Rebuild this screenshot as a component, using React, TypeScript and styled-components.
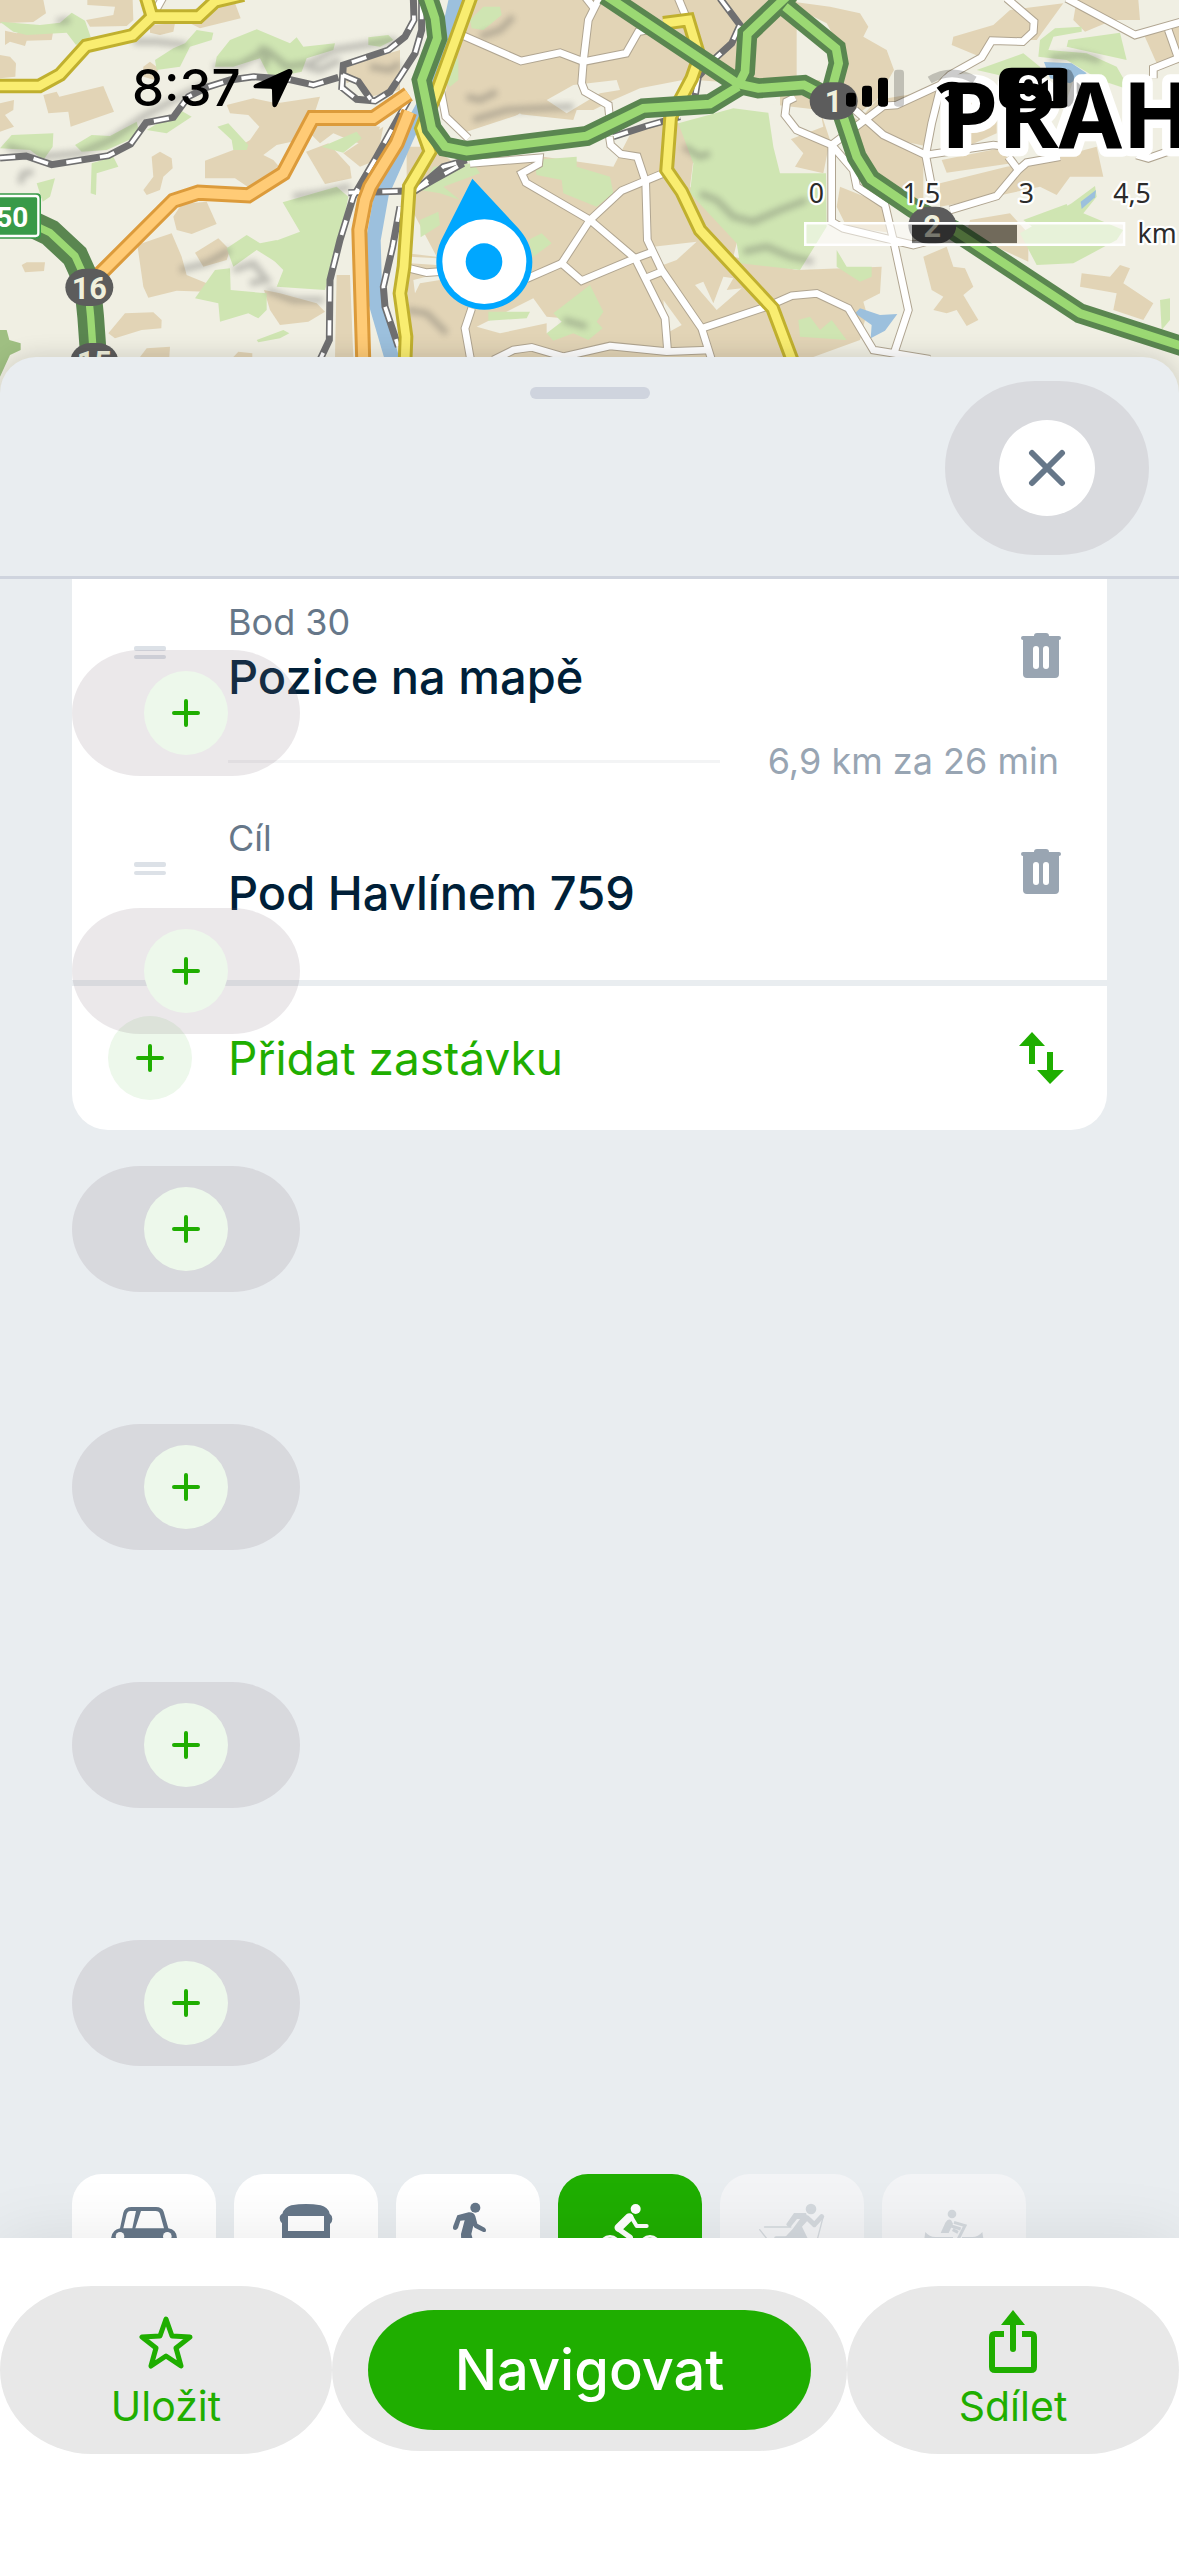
import React from 'react';
import styled, {createGlobalStyle} from 'styled-components';

const GREEN = '#1fae00';
const SLATE = '#667789';
const SHEET = '#e9edf0';

type RoadKind = 'motorway' | 'ring' | 'primary' | 'secondary' | 'street';

const roadStyles: Record<RoadKind, { casing: string; width: number; fill: string; inner: number }> = {
    motorway: {casing: '#5a8650', width: 60, fill: '#9bd873', inner: 26},
    ring: {casing: '#5a8650', width: 80, fill: '#9bd873', inner: 22},
    primary: {casing: '#dc9b3b', width: 48, fill: '#ffcb76', inner: 30},
    secondary: {casing: '#c0b02f', width: 44, fill: '#f9ed70', inner: 26},
    street: {casing: '#b0a591', width: 26, fill: '#ffffff', inner: 20},
};

const Roads = ({kind, lines}: { kind: RoadKind; lines: string[] }) => {
    const s = roadStyles[kind];
    return (
        <g fill="none">
            {lines.map(l => <polyline key={l} points={l} stroke={s.casing} strokeWidth={s.width}/>)}
            {lines.map(l => <polyline key={l} points={l} stroke={s.fill} strokeWidth={s.inner}/>)}
        </g>
    );
};

const Rails = ({lines}: { lines: string[] }) => (
    <g fill="none">
        {lines.map(l => <polyline key={l} points={l} stroke="#6f6f70" strokeWidth="21"/>)}
        {lines.map(l => <polyline key={l} points={l} stroke="#fff" strokeWidth="11" strokeDasharray="46 56"/>)}
    </g>
);

const Areas = ({color, shapes}: { color: string; shapes: string[] }) => (
    <g fill={color}>
        {shapes.map(s => <polygon key={s} points={s}/>)}
    </g>
);

const LAND = '#f0efe3';
const TOWN = '#e2d4b6';
const WOOD = '#cfe5b2';
const WATER = '#9cc0dd';

const leftTown = [
    '0,0 130,0 138,40 100,66 0,70',
    '262,0 398,0 400,60 380,78 270,80 258,60 340,45 345,20 262,15',
    '15,92 50,100 90,85 160,92 155,120 80,122 75,138 30,125 15,135',
    '0,165 30,170 48,190 46,230 0,235',
    '0,310 42,300 40,330 15,345 42,380 0,395',
    '130,285 170,275 178,290 310,258 342,335 212,380 205,335 145,340',
    '560,30 705,10 722,55 600,85 570,70',
    '450,75 525,70 520,95 480,105 450,98',
    '430,200 450,185 475,205 465,240 430,230',
    '680,315 760,295 830,310 960,290 940,350 900,420 830,435 790,465 820,480 855,520 850,540 745,562 705,535 615,535 615,482 700,450 750,420 778,380 745,345 690,340',
    '455,470 480,455 515,475 518,505 490,530 480,570 440,585 430,570 460,530',
    '918,455 985,430 1050,500 1055,535 975,552',
    '940,350 1060,370 1140,380 1120,440 1060,425 1000,400 960,430 930,400',
    '1030,200 1200,150 1200,270 1110,290 1060,240 1040,250',
    '1030,460 1150,380 1130,480 1080,500',
    '520,650 545,612 620,605 650,672 575,702 530,690',
    '412,735 470,715 515,700 545,770 560,825 620,850 618,875 530,872 445,893 430,860',
    '585,758 655,715 690,750 680,780 610,800',
    '65,795 80,787 135,787 132,813 75,817',
    '325,1000 375,940 460,937 485,960 484,985 425,990 345,1015',
    '420,1071 440,1045 510,1040 508,1071',
    '792,870 840,880 950,910 975,935 925,965 840,975 810,930',
    '1010,825 1050,825 1060,1071 1005,1071',
    '700,1071 715,1055 757,1060 757,1071',
];

const centralTown = [
    '170,0 1190,0 1190,232 1015,250 860,238 720,265 640,300 520,360 360,343 200,395 130,330 160,120',
    '20,440 95,440 180,500 430,470 640,500 700,385 780,370 840,370 880,480 870,560 1015,710 1000,770 1190,810 1445,800 1440,880 1390,905 1400,940 1380,1020 1240,1071 30,1071 20,760 110,770 20,600',
];

const eastTown = [
    '0,0 150,20 240,40 265,80 250,110 320,150 342,210 290,300 230,345 190,250 200,180 140,70',
    '0,240 120,240 110,300 150,420 130,520 45,500 70,460 0,380',
    '290,300 470,270 445,440 310,410 250,345',
    '200,340 300,400 430,470 430,620 380,610 290,535 240,470',
    '690,30 850,10 770,120 660,120 600,170 515,135 520,110 640,75',
    '890,0 1075,0 1080,60 1000,60 915,95 880,60',
    '1090,100 1197,70 1197,190 1130,190',
    '485,480 660,445 695,490 500,518',
    '480,550 680,500 780,485 950,440 970,530 870,530 830,585 780,560 640,590 480,620',
    '430,770 500,740 520,800 555,805 580,860 550,885 595,960 560,978 530,930 500,940 460,930 490,890 455,870',
    '905,820 990,830 1020,795 1050,805 1030,850 1120,910 1090,960 1000,930 1010,880 900,860',
    '570,660 690,640 745,700 745,785 560,700',
    '180,560 330,620 340,700 200,680 170,620',
    '520,300 650,260 650,400 560,440 520,390',
];

const greens = [
    '0,65 120,75 180,68 215,38 255,62 272,110 228,135 200,98 80,105 40,95',
    '465,180 520,145 555,130 590,90 640,98 635,120 570,140 540,200 470,210',
    '645,200 650,170 690,120 770,88 870,130 890,112 910,140 1005,130 1000,150 920,175 905,215 810,235 780,175 700,200',
    '225,435 275,405 330,408 410,365 420,405 320,450 245,455',
    '35,405 160,400 158,440 130,480 90,450 0,445',
    '110,550 165,535 150,590 128,605',
    '275,490 340,470 355,500 290,520 288,585 272,580',
    '652,380 685,370 745,435 740,450 700,450 695,420',
    '440,390 540,330 575,350 500,400',
    '965,440 1070,395 1085,415 1030,458',
    '848,607 1010,560 1045,590 1020,720 975,870 830,860 850,810 780,740 900,695',
    '680,745 740,705 780,730 830,720 850,800 770,750 700,800',
    '645,810 690,805 692,870 800,880 800,930 775,955 745,940 660,965 655,910 585,895',
    '770,1020 850,990 868,1000 840,1015 775,1027',
    '1105,112 1165,105 1180,120 1140,140 1105,135',
    '1410,60 1450,20 1500,20 1505,45 1450,90 1415,85',
    '1330,190 1375,175 1375,240 1350,260 1330,240',
    '1600,480 1730,470 1730,500 1830,530 1840,580 1790,620 1690,580 1685,540 1610,525',
    '1260,660 1315,635 1320,675 1262,712',
    '1585,720 1625,700 1655,730 1600,770',
    '1660,940 1770,855 1810,935 1790,965 1808,985 1765,1020 1720,1000 1660,1022 1640,1000 1685,965',
    '1465,935 1590,935 1580,955 1465,962',
    '2035,370 2200,325 2305,338 2320,440 2340,520 2478,520 2480,680 2400,810 2220,790 2210,730 2070,580 2080,490',
    '2395,960 2430,950 2460,990 2495,960 2540,1020 2400,1010',
    '2510,750 2540,800 2615,800 2615,830 2580,845 2510,800',
    '3115,170 3120,120 3165,85 3245,80 3245,95 3160,110 3145,150 3260,160 3350,200 3390,270 3300,240 3200,180',
    '3205,120 3360,98 3380,180 3200,140',
    '2930,210 3070,160 3120,200 3130,250 3060,240',
    '3070,660 3200,612 3210,635 3110,690',
    '3215,610 3285,558 3290,590 3250,640 3370,690 3350,720 3220,790 3110,795 3060,700',
    '3480,900 3510,895 3510,960 3485,990',
    '1300,500 1420,490 1440,520 1330,560 1380,600 1320,580 1260,570',
];

const clearings = [
    '1640,300 1720,255 1850,240 1860,270 1800,280 1700,340',
    '1470,400 1560,340 1580,360 1720,360 1730,330 1840,330 1840,360 1560,395',
    '1960,740 2090,725 2030,780 1975,800',
    '2085,855 2110,845 2140,910 2170,830 2200,835 2180,870 2225,865 2150,930',
    '1990,900 2045,975 2000,1000',
    '1430,980 1600,895 1640,950 1690,955 1690,1000 1640,1000 1640,970 1500,1000',
    '1230,770 1310,775 1310,795 1230,790',
    '1240,840 1320,820 1320,840 1260,850 1245,880',
    '2200,300 2460,330 2470,380 2340,430 2310,340',
    '2160,660 2180,645 2220,700 2200,690',
];

const streets = [
    '1385,105 1563,183 1680,158 1750,185 1878,160 1915,95 1945,90',
    '1800,-10 1765,60 1750,185 1745,250 1755,275 1825,315 1828,345',
    '1755,-10 1785,28',
    '2035,-5 2058,50',
    '1322,270 1337,350 1405,415',
    '1828,410 1832,435 1862,462 1912,470 1937,545 1942,720 1985,810 2105,985 2135,1080',
    '1410,490 1618,474 1616,492 1565,520 1578,548 1770,660 1905,775 1995,955 2003,1055',
    '1995,518 1937,542 1865,572 1770,660 1685,790 1745,842 1905,775 1960,755',
    '1685,790 1580,836',
    '1215,802 1280,818 1320,815',
    '1940,833 1985,815',
    '2105,985 2305,918 2375,887 2450,880 2545,925 2620,1050 2680,1060 2790,1078',
    '1480,1080 1540,1050 1595,1042 1690,1070 1830,1038 2000,1055 2130,1050',
    '1415,925 1395,985 1412,1080',
    '3020,-5 3102,65 3100,95 3068,125 2975,122 2945,172 2850,225 2820,255 2690,315 2650,318 2495,435 2495,665 2530,685 2740,735 2780,725',
    '2495,435 2390,390 2355,345 2360,305 2385,292',
    '2565,330 2650,405 2777,465 2980,435 3020,440',
    '2820,270 2795,370 2777,465 2795,560',
    '2495,435 2560,510 2570,560 2655,615 2680,720 2725,930 2682,1060',
    '2850,630 2990,588 3055,510 3080,488 3180,470',
    '3025,470 3055,510',
    '3200,-5 3405,105 3545,65',
    '3505,90 3535,175 3460,205 3460,235',
    '3545,440 3445,475 3410,465',
    '462,40 490,-10',
];

// soft relief strokes, blurred below
const relief = [
    '20,440 130,470 240,460 330,420 430,350 540,290 620,250',
    '640,200 720,195 800,150 860,200 930,190 1000,150 1190,120',
    '780,140 800,170 790,205',
    '920,200 960,210 1020,180',
    '880,590 960,580 1050,560',
    '700,810 760,790 800,840 750,850',
    '800,870 880,900 970,900',
    '1110,200 1170,210 1200,190',
    '1400,290 1440,300 1490,275',
    '1420,360 1520,330 1720,320',
    '1440,110 1500,90 1540,50',
    '2050,440 2100,470 2130,460',
    '2100,580 2150,600 2200,650 2260,665 2340,630 2420,600',
    '2230,755 2300,740 2370,770 2440,785',
    '400,125 470,125 560,135',
    '3150,175 3240,165 3300,180',
    '1220,930 1280,940 1340,1000',
    '1690,960 1760,980',
    '60,550 70,520 100,515',
    '170,65 210,60',
    '540,810 620,790 690,750',
];

const MapDrawing = () => (
    <MapSvg viewBox="0 0 3537 1200" preserveAspectRatio="xMinYMin slice" aria-label="Mapa">
        <defs>
            <filter id="relief" x="-5%" y="-5%" width="110%" height="110%">
                <feGaussianBlur stdDeviation="9"/>
            </filter>
        </defs>
        <rect width="3537" height="1200" fill={LAND}/>
        <Areas color={TOWN} shapes={leftTown}/>
        <g transform="translate(1200)"><Areas color={TOWN} shapes={centralTown}/></g>
        <g transform="translate(2340)"><Areas color={TOWN} shapes={eastTown}/></g>
        <Areas color={LAND} shapes={clearings}/>
        <Areas color={WOOD} shapes={greens}/>
        <Areas color="#9fbf82" shapes={['0,990 20,990 28,1020 62,1030 62,1050 30,1065 0,1130']}/>
        <Areas
            color={WATER}
            shapes={[
                '2565,940 2580,925 2640,945 2692,942 2655,992 2612,1015 2615,975',
                '3132,186 3215,190 3260,220 3210,250 3150,235',
                '3242,605 3288,570 3285,592 3245,627',
            ]}
        />
        <g fill="none" stroke="#555" strokeWidth="20" opacity="0.32" filter="url(#relief)">
            {relief.map(r => <polyline key={r} points={r}/>)}
        </g>
        <polyline
            points="1370,-10 1335,150 1280,300 1225,400 1145,580 1120,720 1125,900 1180,1090"
            fill="none" stroke={WATER} strokeWidth="44"
        />
        <Rails lines={[
            '0,474 78,468 155,494 325,467 392,432 438,368 520,352 565,290 620,262 690,240 760,230 865,238 940,255 1015,232',
            '1025,270 1030,195 1165,150 1215,110 1242,60 1240,-5',
            '1028,225 1075,245 1112,298',
            '1025,262 1070,298 1125,303 1170,275 1200,230 1245,160 1265,90 1265,-5',
            '1225,300 1130,470 1060,590 1020,720 990,840 988,1020 955,1090',
            '1045,578 1245,572 1330,500 1400,480',
            '1245,572 1300,540 1390,490',
            '1200,620 1178,740 1150,860 1155,920 1195,1040',
            '2160,-5 2220,75 2195,130 2140,180 2095,230 2085,290',
            '1840,410 1940,378 2040,350',
        ]}/>
        <Roads kind="street" lines={streets}/>
        <Roads kind="secondary" lines={[
            '-10,258 118,258 180,224 258,138 398,106 456,50 596,50 645,4 730,-16',
            '456,50 435,-20',
            '1415,-15 1312,270 1265,385 1290,455 1228,560 1212,800 1200,880 1218,1010 1215,1090',
            '1990,70 2065,60 2098,170 2075,235 2035,310 2012,350 2000,510 2045,575 2100,690 2318,925 2380,1090',
        ]}/>
        <Roads kind="primary" lines={[
            '300,822 520,602 595,578 745,586 850,520 938,354 1120,354 1225,282',
            '1228,335 1190,430 1110,560 1095,600 1078,690 1090,1090',
        ]}/>
        <Roads kind="motorway" lines={[
            '1283,-10 1305,55 1312,115 1265,240 1295,385 1335,440 1400,453 1760,408 1930,325 2130,312 2215,260',
            '2215,255 2235,215 2242,102 2370,-20',
            '1815,-15 2215,252 2275,265 2412,255 2470,285',
            '2355,20 2508,145 2516,190 2500,250 2530,350 2570,470 2612,538 2740,625 2860,690 3240,940 3550,1040',
        ]}/>
        <Roads kind="ring" lines={['70,660 150,698 225,768 262,850 272,950 282,1090']}/>

        <rect x="-40" y="580" width="163" height="136" rx="12" fill="#389a48"/>
        <rect x="-40" y="588" width="155" height="120" rx="8" fill="none" stroke="#fff" strokeWidth="7"/>
        <SignText x="37" y="680">50</SignText>
        <Exit x={268} y={862} label="16"/>
        <Exit x={283} y={1085} label="15"/>
        <Exit x={2501} y={303} label="1"/>
        <Exit x={2797} y={676} label="2"/>

        <path
            d="M1417 536 L1555 685 C1582 715 1597 750 1597 786 A144 143 0 0 1 1309 786 C1309 755 1318 730 1330 708 Z"
            fill="#00a7ff"
        />
        <ellipse cx="1453" cy="785" rx="126" ry="127" fill="#fff"/>
        <circle cx="1452" cy="785" r="55" fill="#00a7ff"/>

        <CityName x="2823" y="443">PRAH</CityName>

        <rect x="2420" y="674" width="316" height="56" fill="#fff" fillOpacity="0.5"/>
        <rect x="2736" y="674" width="315" height="56" fill="#000" fillOpacity="0.5"/>
        <rect x="3051" y="674" width="317" height="56" fill="#fff" fillOpacity="0.5"/>
        <rect x="2416" y="670" width="956" height="64" fill="none" stroke="#fff" strokeWidth="8"/>
        <ScaleText x="2449" y="610">0</ScaleText>
        <ScaleText x="2764" y="610">1,5</ScaleText>
        <ScaleText x="3079" y="610">3</ScaleText>
        <ScaleText x="3396" y="610">4,5</ScaleText>
        <ScaleText x="3471" y="728">km</ScaleText>
    </MapSvg>
);

const Exit = ({x, y, label}: { x: number; y: number; label: string }) => (
    <g>
        <rect x={x - 72} y={y - 56} width="144" height="112" rx="62" ry="56" fill="#5c5c5c"/>
        <ExitText x={x} y={y + 34}>{label}</ExitText>
    </g>
);

const StatusBar = () => (
    <Status>
        <Clock>
            8:37
            <svg width="40" height="40" viewBox="0 0 118 116">
                <path
                    d="M103 3 L8 46 C-2 51 0 59 9 59 L52 60 Q56 60 56 64 L57 106 C57 116 67 118 71 109 L116 14 C119 6 111 -1 103 3Z"
                    fill="#000"
                />
            </svg>
        </Clock>
        <svg width="246" height="48" viewBox="0 0 738 144" aria-label="Signál, Wi-Fi a baterie">
            <defs>
                <mask id="charge">
                    <rect width="738" height="144" fill="#fff"/>
                    <ChargeText x="571" y="112">91</ChargeText>
                </mask>
            </defs>
            <rect x="0" y="86" width="30" height="42" rx="10"/>
            <rect x="48" y="65" width="30" height="63" rx="10"/>
            <rect x="96" y="41" width="30" height="87" rx="10"/>
            <rect x="144" y="17" width="30" height="111" rx="10" opacity="0.2"/>
            <g fill="none" stroke="#000" strokeWidth="23">
                <path d="M251 48 Q318 8 386 48" opacity="0.2"/>
                <path d="M279 80 Q318 50 357 80"/>
            </g>
            <path d="M296 102 Q318 86 340 102 L318 126Z"/>
            <path d="M664 14 Q684 20 684 46 V96 Q684 124 664 130Z" opacity="0.28"/>
            <path d="M692 54 Q704 60 704 72 Q704 84 692 90Z" opacity="0.28"/>
            <path
                d="M497 11 H640 Q664 11 664 20 V124 Q664 133 640 133 H497 Q459 133 459 95 V49 Q459 11 497 11Z"
                mask="url(#charge)"
            />
        </svg>
    </Status>
);

const PlusIcon = () => (
    <svg width="28" height="28" viewBox="0 0 28 28">
        <path d="M14 2V26M2 14H26" stroke={GREEN} strokeWidth="4" strokeLinecap="round"/>
    </svg>
);

const TrashIcon = () => (
    <svg width="40" height="45" viewBox="0 0 40 45">
        <path
            d="M13 3Q13 0 16 0H25Q28 0 28 3H38Q40 3 40 5T38 7V41Q38 45 34 45H6Q2 45 2 41V7Q0 7 0 5T2 3Z"
            fill="#99a5b2"
        />
        <rect x="12" y="13" width="6" height="23" rx="3" fill="#fff"/>
        <rect x="22" y="13" width="6" height="23" rx="3" fill="#fff"/>
    </svg>
);

const GripIcon = () => (
    <svg width="32" height="14" viewBox="0 0 32 14">
        <rect width="32" height="5" rx="2" fill="#dce1e7"/>
        <rect y="9" width="32" height="4" rx="2" fill="#dce1e7"/>
    </svg>
);

const stops = [
    {label: 'Bod 30', name: 'Pozice na mapě', leg: '6,9 km za 26 min'},
    {label: 'Cíl', name: 'Pod Havlínem 759'},
];

type Mode = {
    name: string;
    state?: 'active' | 'disabled';
    icon: React.ReactNode;
}

const modes: Mode[] = [
    {
        name: 'Auto',
        icon: (
            <>
                <path
                    fillRule="evenodd"
                    d="M144 163 L154 116 Q158 99 179 99 H252 Q270 99 275 113 L289 163 Q315 166 315 196 V260 H117 V196 Q118 168 144 163Z M154 163 L164 120 Q167 111 174 111 H192 L181 163Z M190 163 L207 111 H250 Q262 111 264 120 L276 163Z"
                    fill="currentColor"
                />
                <circle cx="144" cy="187" r="13" fill="#fff"/>
                <circle cx="286" cy="187" r="13" fill="#fff"/>
            </>
        ),
    },
    {
        name: 'MHD',
        icon: (
            <path
                fillRule="evenodd"
                d="M144 270 V148 Q137 142 137 133 Q137 122 145 119 Q152 99 172 94 Q216 86 260 94 Q282 99 287 119 Q295 124 295 135 Q295 145 288 150 V270Z M162 126 V171 H270 V126Z"
                fill="currentColor"
            />
        ),
    },
    {
        name: 'Pěšky',
        icon: (
            <>
                <circle cx="238" cy="101" r="15" fill="currentColor"/>
                <path
                    d="M184 124 L218 115 Q234 114 238 127 L244 149 L266 161 Q273 167 268 174 L262 174 L236 161 L232 155 L226 180 L234 210 H196 L195 180 L206 139 L193 140 L186 162 Q180 171 172 166 Q170 162 172 155Z"
                    fill="currentColor"
                />
            </>
        ),
    },
    {
        name: 'Kolo',
        state: 'active',
        icon: (
            <g fill="none" stroke="currentColor" strokeLinecap="round" strokeLinejoin="round">
                <circle cx="233" cy="105" r="15" fill="currentColor" stroke="none"/>
                <path d="M214 130 L182 161" strokeWidth="25"/>
                <path d="M218 126 L236 156 H266" strokeWidth="12"/>
                <path d="M184 167 L217 190 V230" strokeWidth="16"/>
                <circle cx="156" cy="216" r="29" strokeWidth="8"/>
                <circle cx="276" cy="216" r="29" strokeWidth="8"/>
            </g>
        ),
    },
    {
        name: 'Běžky',
        state: 'disabled',
        icon: (
            <g fill="none" stroke="currentColor" strokeLinecap="round" strokeLinejoin="round">
                <circle cx="273" cy="105" r="16" fill="currentColor" stroke="none"/>
                <path
                    d="M222 117 H258 L265 137 L246 158 L264 195 H190 L218 165 L240 135 H231 L211 160 Q198 156 199 150Z"
                    fill="currentColor" stroke="none"
                />
                <path d="M262 132 L283 152 L305 128" strokeWidth="15"/>
                <path d="M309 130 L291 200" strokeWidth="4"/>
                <path d="M134 159 H212" strokeWidth="5"/>
                <path d="M119 167 L150 206" strokeWidth="4"/>
                <path d="M168 192 H215" strokeWidth="11"/>
            </g>
        ),
    },
    {
        name: 'Loď',
        state: 'disabled',
        icon: (
            <>
                <circle cx="210" cy="120" r="13" fill="currentColor"/>
                <path d="M176 177 L190 146 Q198 132 207 138 L213 149 L200 177Z" fill="currentColor"/>
                <path
                    d="M216 145 L249 155 L223 206 M208 156 L236 165 M212 167 L228 175"
                    fill="none" stroke="currentColor" strokeWidth="9"
                />
                <path
                    d="M126 200 L130 174 Q142 189 160 189 H213 V200Z M305 200 L301 174 Q289 189 271 189 H240 V200Z"
                    fill="currentColor"
                />
            </>
        ),
    },
];

const App = () => (
    <Page>
        <GlobalStyle/>
        <MapArea>
            <MapDrawing/>
            <StatusBar/>
        </MapArea>
        <Sheet>
            <SheetHeader>
                <Grabber/>
                <CloseButton aria-label="Zavřít">
                    <CloseDisc>
                        <svg width="38" height="38" viewBox="0 0 38 38">
                            <path d="M4 4L34 34M34 4L4 34" stroke={SLATE} strokeWidth="6" strokeLinecap="round"/>
                        </svg>
                    </CloseDisc>
                </CloseButton>
            </SheetHeader>
            <SheetBody>
                <Card>
                    <Stops>
                        {stops.map(stop => (
                            <li key={stop.label}>
                                <StopRow>
                                    <GripIcon/>
                                    <div>
                                        <StopLabel>{stop.label}</StopLabel>
                                        <StopName>{stop.name}</StopName>
                                    </div>
                                    <RemoveButton aria-label={`Odstranit ${stop.name}`}>
                                        <TrashIcon/>
                                    </RemoveButton>
                                </StopRow>
                                {stop.leg && <Leg>{stop.leg}</Leg>}
                            </li>
                        ))}
                    </Stops>
                    <AddRow>
                        <AddButton>
                            <PlusDisc><PlusIcon/></PlusDisc>
                            Přidat zastávku
                        </AddButton>
                        <SwapButton aria-label="Otočit trasu">
                            <svg width="46" height="52" viewBox="0 0 46 52">
                                <path
                                    d="M13 0L26 14H16V32H10V14H0Z M28 20H34V38H45L31 52L18 38H28Z"
                                    fill={GREEN}
                                />
                            </svg>
                        </SwapButton>
                    </AddRow>
                </Card>
                <Inserts>
                    {[1, 2, 3, 4, 5, 6].map(n => (
                        <InsertButton key={n} aria-label={`Vložit zastávku ${n}`}>
                            <PlusDisc><PlusIcon/></PlusDisc>
                        </InsertButton>
                    ))}
                </Inserts>
                <Modes>
                    {modes.map(mode => (
                        <ModeButton key={mode.name} $state={mode.state} aria-label={mode.name}>
                            <svg width="144" height="144" viewBox="0 0 432 432">{mode.icon}</svg>
                        </ModeButton>
                    ))}
                </Modes>
            </SheetBody>
        </Sheet>
        <BottomBar>
            <ActionButton>
                <ActionIcon>
                    <svg width="54" height="53" viewBox="0 0 54 53">
                        <path
                            d="M27 3L33 20L51 21L37 32L42 50L27 40L12 50L17 32L3 21L21 20Z"
                            fill="none" stroke={GREEN} strokeWidth="5" strokeLinejoin="round"
                        />
                    </svg>
                </ActionIcon>
                Uložit
            </ActionButton>
            <NavigateButton>
                <NavigateLabel>Navigovat</NavigateLabel>
            </NavigateButton>
            <ActionButton>
                <ActionIcon>
                    <svg width="48" height="64" viewBox="0 0 48 64">
                        <path
                            d="M15 24H6Q3 24 3 27V57Q3 60 6 60H42Q45 60 45 57V27Q45 24 42 24H33"
                            fill="none" stroke={GREEN} strokeWidth="6"
                        />
                        <path d="M24 12V39" stroke={GREEN} strokeWidth="6" strokeLinecap="round"/>
                        <path d="M24 0L36 15H12Z" fill={GREEN}/>
                    </svg>
                </ActionIcon>
                Sdílet
            </ActionButton>
        </BottomBar>
    </Page>
);

export default App;

const GlobalStyle = createGlobalStyle`
  * {
    box-sizing: border-box;
  }

  body {
    margin: 0;
    background: #fff;
    font-family: Inter, "Noto Sans", sans-serif;
  }

  button {
    margin: 0;
    padding: 0;
    border: 0;
    background: none;
    font: inherit;
    color: inherit;
    cursor: pointer;
  }

  svg {
    display: block;
    flex: none;
  }
`;

const Page = styled.main`
  display: flex;
  flex-direction: column;
  height: 100vh;
  overflow: hidden;
`;

const MapArea = styled.div`
  position: relative;
  flex: none;
  height: 400px;
  overflow: hidden;
`;

const MapSvg = styled.svg`
  width: 100%;
  height: 100%;
`;

const SignText = styled.text`
  font: 700 84px "Liberation Sans Narrow", Roboto, sans-serif;
  text-anchor: middle;
  fill: #fff;
`;

const ExitText = styled.text`
  font: 700 92px "Liberation Sans Narrow", Roboto, sans-serif;
  text-anchor: middle;
  fill: #f0f0dc;
`;

const CityName = styled.text`
  font: 700 276px "Noto Sans", sans-serif;
  fill: #000;
  stroke: #fff;
  stroke-width: 50px;
  stroke-linejoin: round;
  paint-order: stroke;
`;

const ScaleText = styled.text`
  font: 400 80px "Noto Sans", sans-serif;
  text-anchor: middle;
  fill: #2b2b2b;
  stroke: #fff;
  stroke-width: 14px;
  stroke-linejoin: round;
  paint-order: stroke;
`;

const ChargeText = styled.text`
  font: 700 106px Inter, sans-serif;
  text-anchor: middle;
  fill: #000;
`;

const Status = styled.div`
  position: absolute;
  top: 0;
  left: 0;
  right: 0;
  display: flex;
  align-items: center;
  justify-content: space-between;
  padding: 63px 87px 0 132px;
`;

const Clock = styled.div`
  display: flex;
  align-items: center;
  gap: 12px;
  font-size: 51px;
  font-weight: 500;
  line-height: 50px;
`;

const Sheet = styled.section`
  position: relative;
  flex: 1;
  display: flex;
  flex-direction: column;
  min-height: 0;
  margin-top: -43px;
  border-radius: 36px 36px 0 0;
  background: ${SHEET};
  box-shadow: 0 0 24px rgba(0, 0, 0, 0.16);
`;

const SheetHeader = styled.header`
  display: grid;
  grid-template-columns: 1fr 120px 1fr;
  align-items: start;
  height: 222px;
  padding: 24px 30px 0;
  border-bottom: 3px solid #cfd4de;
`;

const Grabber = styled.div`
  grid-column: 2;
  height: 12px;
  margin-top: 6px;
  border-radius: 6px;
  background: #cfd4de;
`;

const CloseButton = styled.button`
  display: flex;
  align-items: center;
  justify-content: center;
  justify-self: end;
  width: 204px;
  height: 174px;
  border-radius: 90px / 87px;
  background: #d9dade;
`;

const CloseDisc = styled.span`
  display: flex;
  align-items: center;
  justify-content: center;
  width: 96px;
  height: 96px;
  border-radius: 50%;
  background: #fff;
`;

const SheetBody = styled.div`
  position: relative;
  flex: 1;
  display: flex;
  flex-direction: column;
  min-height: 0;
  padding: 0 72px;
  overflow: hidden;
`;

const Card = styled.div`
  border-radius: 0 0 36px 36px;
  background: #fff;
`;

const Stops = styled.ul`
  margin: 0;
  padding: 0 0 37px;
  border-bottom: 6px solid ${SHEET};
  list-style: none;
`;

const StopRow = styled.div`
  display: grid;
  grid-template-columns: 32px 1fr auto;
  column-gap: 62px;
  align-items: center;
  height: 148px;
  padding: 0 46px 0 62px;
`;

const StopLabel = styled.div`
  font-size: 36px;
  line-height: 48px;
  color: ${SLATE};
`;

const StopName = styled.div`
  font-size: 47px;
  font-weight: 500;
  line-height: 62px;
  color: #001f38;
`;

const RemoveButton = styled.button`
  padding-top: 5px;
`;

const SwapButton = styled.button`
  flex: none;
`;

const Leg = styled.div`
  display: flex;
  align-items: center;
  gap: 48px;
  height: 68px;
  padding: 0 48px 0 156px;
  font-size: 36px;
  color: #98a5b3;

  &::before {
    content: "";
    flex: 1;
    height: 3px;
    background: #f3f4f5;
  }
`;

const AddRow = styled.div`
  display: flex;
  align-items: center;
  justify-content: space-between;
  height: 144px;
  padding: 0 42px 0 36px;
`;

const AddButton = styled.button`
  display: flex;
  align-items: center;
  gap: 36px;
  font-size: 46px;
  color: ${GREEN};
`;

const PlusDisc = styled.span`
  display: flex;
  align-items: center;
  justify-content: center;
  width: 84px;
  height: 84px;
  border-radius: 50%;
  background: #edf8eb;
`;

const Inserts = styled.div`
  position: absolute;
  top: 71px;
  left: 72px;
  display: flex;
  flex-direction: column;
  gap: 132px;
`;

const InsertButton = styled.button`
  display: flex;
  align-items: center;
  justify-content: center;
  width: 228px;
  height: 126px;
  border-radius: 68px / 63px;
  background: rgba(128, 114, 122, 0.16);
`;

const Modes = styled.div`
  display: flex;
  gap: 18px;
  margin-top: auto;
  margin-bottom: -80px;
`;

const ModeButton = styled.button<{ $state?: Mode['state'] }>`
  flex: none;
  width: 144px;
  height: 144px;
  border-radius: 30px;
  background: ${({$state}) => $state === 'active' ? GREEN : $state === 'disabled' ? '#f3f4f6' : '#fff'};
  color: ${({$state}) => $state === 'active' ? '#fff' : $state === 'disabled' ? '#d4d9de' : SLATE};
`;

const BottomBar = styled.nav`
  position: relative;
  flex: none;
  display: grid;
  grid-template-columns: 332fr 515fr 332fr;
  align-items: center;
  padding: 48px 0 102px;
  background: #fff;
  box-shadow: 0 6px 66px rgba(0, 0, 0, 0.1);
`;

const ActionButton = styled.button`
  display: flex;
  flex-direction: column;
  align-items: center;
  justify-content: center;
  height: 168px;
  border-radius: 92px / 84px;
  background: #e8e8e8;
  font-size: 41px;
  line-height: 56px;
  color: ${GREEN};
`;

const ActionIcon = styled.span`
  display: flex;
  align-items: center;
  height: 72px;
`;

const NavigateButton = styled.button`
  display: flex;
  height: 162px;
  padding: 21px 36px;
  border-radius: 88px / 81px;
  background: #e8e8e8;
`;

const NavigateLabel = styled.span`
  flex: 1;
  border-radius: 66px / 60px;
  background: ${GREEN};
  font-size: 56px;
  font-weight: 500;
  line-height: 120px;
  color: #fff;
`;
